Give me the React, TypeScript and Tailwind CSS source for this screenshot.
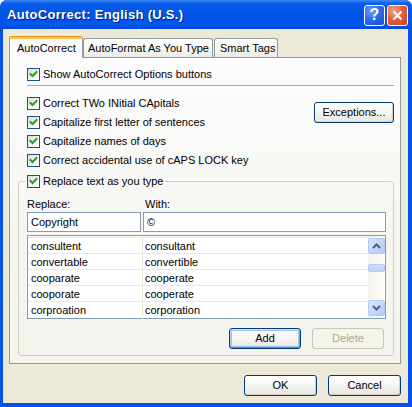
const ROWS: [string, string][] = [
  ["consultent", "consultant"],
  ["convertable", "convertible"],
  ["cooparate", "cooperate"],
  ["cooporate", "cooperate"],
  ["corproation", "corporation"],
];

function Check() {
  return (
    <span className="flex h-[13px] w-[13px] shrink-0 items-center justify-center border border-[#1C5180] bg-[linear-gradient(135deg,#DCDCD7_0%,#F6F6F3_60%,#FFFFFF_100%)]">
      <svg width="11" height="11" viewBox="0 0 11 11">
        <path d="M2.5 5 L4.5 7 L8.5 3" stroke="#21A121" strokeWidth="2" fill="none" strokeLinecap="square" />
      </svg>
    </span>
  );
}

function CheckRow({ label }: { label: string }) {
  return (
    <div className="flex h-[13px] items-center gap-[3px] whitespace-nowrap leading-[13px]">
      <Check />
      <span>{label}</span>
    </div>
  );
}

function Button({ label, className }: { label: string; className: string }) {
  return (
    <div
      className={
        "flex h-[21px] items-center justify-center rounded-[3px] border leading-none " + className
      }
    >
      {label}
    </div>
  );
}

const normalBtn =
  "border-[#003C74] bg-[linear-gradient(to_bottom,#FFFFFF_0%,#F4F4F0_55%,#E6E5DE_100%)] shadow-[inset_-1px_-1px_0_#D6D0C5]";
const focusBtn =
  "border-[#003C74] bg-[linear-gradient(to_bottom,#FFFFFF_0%,#F4F4F0_55%,#E6E5DE_100%)] shadow-[inset_0_1px_0_#CEE7FF,inset_0_-1px_0_#6982EE,inset_1px_0_0_#B9D1FA,inset_-1px_0_0_#7B9DE9,inset_0_0_0_2px_#A5BFF0]";
const disabledBtn = "border-[#C9C7BA] bg-[#F5F4EA] text-[#ACA899]";

function ScrollArrow({ up }: { up: boolean }) {
  return (
    <div className="flex h-[16px] w-[17px] items-center justify-center rounded-[2px] border border-[#B4C8F6] bg-[linear-gradient(135deg,#DCE7FE_0%,#C1D3FB_60%,#B4C8F4_100%)]">
      <svg width="9" height="6" viewBox="0 0 9 6">
        <path
          d={up ? "M1 5 L4.5 1.5 L8 5" : "M1 1 L4.5 4.5 L8 1"}
          stroke="#4D6185"
          strokeWidth="2"
          fill="none"
        />
      </svg>
    </div>
  );
}

export default function App() {
  return (
    <div className="flex h-[407px] w-[412px] flex-col overflow-hidden rounded-t-[7px] bg-[#0553E8] font-['Liberation_Sans',Arial,sans-serif] text-[11px] text-black">
      {/* Title bar */}
      <div className="flex h-[29px] shrink-0 items-center bg-[linear-gradient(to_bottom,#3D8DF5_0%,#0A5DEA_12%,#0054E3_45%,#0157EC_85%,#0047D3_100%)] pl-[7px] pr-[4px]">
        <span className="flex-1 text-[13px] font-bold tracking-[0.3px] text-white [text-shadow:1px_1px_#0A1883]">
          AutoCorrect: English (U.S.)
        </span>
        <div className="mt-[1px] flex gap-[2px]">
          <div className="flex h-[21px] w-[21px] items-center justify-center rounded-[3px] border border-white bg-[radial-gradient(circle_at_30%_25%,#6D9CFB_0%,#2F6BEF_45%,#1B4DD3_100%)] text-[16px] font-bold leading-none text-white">
            ?
          </div>
          <div className="flex h-[21px] w-[21px] items-center justify-center rounded-[3px] border border-white bg-[radial-gradient(circle_at_30%_25%,#F3A288_0%,#E35F3C_45%,#C8401E_100%)]">
            <svg width="11" height="11" viewBox="0 0 11 11">
              <path d="M1.5 1.5 L9.5 9.5 M9.5 1.5 L1.5 9.5" stroke="white" strokeWidth="2.2" />
            </svg>
          </div>
        </div>
      </div>

      {/* Body */}
      <div className="mx-[3px] mb-[4px] mr-[4px] flex flex-1 flex-col bg-[#ECE9D8]">
        {/* Tabs */}
        <div className="relative z-10 mt-[7px] flex items-end pl-[6px]">
          <div className="-mb-px flex h-[22px] w-[74px] flex-col overflow-hidden rounded-t-[3px] border-x border-[#919B9C] bg-[#FCFCFE]">
            <div className="h-[1px] bg-[#E68B2C]" />
            <div className="h-[2px] bg-[#FFC73C]" />
            <div className="flex flex-1 items-center pl-[7px]">AutoCorrect</div>
          </div>
          <div className="flex h-[19px] w-[130px] items-center rounded-t-[3px] border border-b-0 border-[#919B9C] bg-[linear-gradient(to_bottom,#FFFFFF_0%,#F7F7F4_50%,#ECEBE6_100%)] pl-[4px]">
            AutoFormat As You Type
          </div>
          <div className="ml-[1px] flex h-[19px] w-[64px] items-center rounded-t-[3px] border border-b-0 border-[#919B9C] bg-[linear-gradient(to_bottom,#FFFFFF_0%,#F7F7F4_50%,#ECEBE6_100%)] pl-[5px]">
            Smart Tags
          </div>
        </div>

        {/* Panel */}
        <div className="ml-[6px] flex h-[307px] w-[392px] flex-col border border-[#919B9C] bg-[linear-gradient(to_bottom,#FCFCFE_0%,#F7F7F3_40%,#F4F3EE_100%)] pl-[8px] pr-[6px]">
          <div className="ml-[9px] mt-[10px]">
            <CheckRow label="Show AutoCorrect Options buttons" />
          </div>
          <div className="ml-[9px] mt-[4px] h-[2px] border-t border-b border-t-[#ACA899] border-b-white" />

          <div className="ml-[9px] mt-[10px] flex justify-between">
            <div className="flex flex-col gap-[6px]">
              <CheckRow label="Correct TWo INitial CApitals" />
              <CheckRow label="Capitalize first letter of sentences" />
              <CheckRow label="Capitalize names of days" />
              <CheckRow label="Correct accidental use of cAPS LOCK key" />
            </div>
            <Button label="Exceptions..." className={"mt-[5px] w-[80px] " + normalBtn} />
          </div>

          <fieldset className="mt-[8px] h-[181px] rounded-[3px] border border-[#D0D0BF] pl-[6px] pr-[7px]">
            <legend className="px-[2px]">
              <CheckRow label="Replace text as you type" />
            </legend>
            <div className="pl-[2px]">
              <div className="mt-[10px] grid grid-cols-[114px_1fr] gap-x-[2px] leading-[13px]">
                <span>Replace:</span>
                <span className="pl-[2px]">With:</span>
              </div>
              <div className="mt-[1px] grid h-[20px] grid-cols-[114px_1fr] gap-x-[2px]">
                <div className="flex items-center border border-[#7F9DB9] bg-white pl-[3px]">Copyright</div>
                <div className="flex items-center border border-[#7F9DB9] bg-white pl-[3px]">©</div>
              </div>

              <div className="mt-[3px] flex h-[84px] border border-[#7F9DB9] bg-white">
                <div className="flex-1 pt-px">
                  <div className="border-t border-[#ECE9D8]">
                    {ROWS.map(([a, b], i) => (
                      <div
                        key={i}
                        className={
                          "grid h-[16px] grid-cols-[115px_1fr] " +
                          (i < ROWS.length - 1 ? "border-b border-[#ECE9D8]" : "")
                        }
                      >
                        <span className="flex items-center border-r border-[#ECE9D8] pl-[3px]">{a}</span>
                        <span className="flex items-center pl-[2px]">{b}</span>
                      </div>
                    ))}
                  </div>
                </div>
                <div className="flex w-[17px] flex-col bg-[linear-gradient(to_right,#F3F1EC_0%,#FEFEFB_100%)] py-[2px]">
                  <ScrollArrow up />
                  <div className="mt-[10px] h-[8px] rounded-[2px] border border-[#B4C8F6] bg-[linear-gradient(to_bottom,#D2DEFD_0%,#BCCEF9_100%)]" />
                  <div className="flex-1" />
                  <ScrollArrow up={false} />
                </div>
              </div>

              <div className="mr-[2px] mt-[9px] flex justify-end gap-[11px]">
                <Button label="Add" className={"w-[72px] " + focusBtn} />
                <Button label="Delete" className={"w-[72px] " + disabledBtn} />
              </div>
            </div>
          </fieldset>
        </div>

        {/* Dialog buttons */}
        <div className="mt-[11px] flex justify-end gap-[11px] pr-[7px]">
          <Button label="OK" className={"w-[73px] " + normalBtn} />
          <Button label="Cancel" className={"w-[73px] " + normalBtn} />
        </div>
      </div>
    </div>
  );
}
